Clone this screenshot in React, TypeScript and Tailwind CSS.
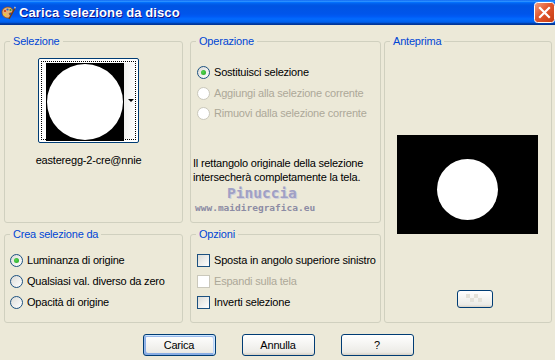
import React from "react";

const font = "font-['Liberation_Sans',Arial,sans-serif]";

function Radio({ checked = false, disabled = false, label }: { checked?: boolean; disabled?: boolean; label: string }) {
  return (
    <div className="flex items-center h-full whitespace-nowrap">
      <span
        className={`w-[13px] h-[13px] rounded-full border flex items-center justify-center shrink-0 ${
          disabled
            ? "border-[#cac8bb] bg-white"
            : "border-[#1c5180] bg-[linear-gradient(135deg,#dcdcd7,#ffffff)]"
        }`}
      >
        {checked && <span className="w-[5px] h-[5px] rounded-full bg-[radial-gradient(circle_at_40%_40%,#55d651,#21a121)]" />}
      </span>
      <span className={`ml-[4px] ${disabled ? "text-[#aca899]" : "text-black"}`}>{label}</span>
    </div>
  );
}

function Check({ disabled = false, label }: { disabled?: boolean; label: string }) {
  return (
    <div className="flex items-center h-full whitespace-nowrap">
      <span
        className={`w-[13px] h-[13px] border shrink-0 ${
          disabled
            ? "border-[#cac8bb] bg-white"
            : "border-[#1c5180] bg-[linear-gradient(135deg,#dcdcd7,#ffffff)]"
        }`}
      />
      <span className={`ml-[4px] ${disabled ? "text-[#aca899]" : "text-black"}`}>{label}</span>
    </div>
  );
}

function Group({ title, className, children }: { title: string; className: string; children: React.ReactNode }) {
  return (
    <fieldset className={`border border-[#d0d0bf] rounded-[3px] ${className}`}>
      <legend className="ml-[5px] px-[3px] leading-[13px] text-[#0046d5]">{title}</legend>
      {children}
    </fieldset>
  );
}

function XpButton({ label, isDefault = false }: { label: string; isDefault?: boolean }) {
  return (
    <button
      className={`w-[73px] h-[22px] rounded-[3px] border border-[#003c74] bg-[linear-gradient(180deg,#ffffff,#ecebe6_86%,#d6d0c5)] text-black leading-none ${
        isDefault
          ? "shadow-[inset_-1px_1px_#cee7ff,inset_1px_2px_#98b8ea,inset_-2px_2px_#bcd4f6,inset_1px_-1px_#89ade4,inset_2px_-2px_#89ade4]"
          : ""
      }`}
    >
      {label}
    </button>
  );
}

function AppIcon() {
  return (
    <svg width="16" height="16" viewBox="0 0 16 16" className="shrink-0">
      <path d="M2 7c0-3 3-5 6-5 3 0 5 2 5 4 0 2-2 2-3 2s-1 1 0 2c1 1 0 3-2 3-3 0-6-2-6-6z" fill="#e8b070" stroke="#8a4b1c" strokeWidth="0.8" />
      <circle cx="5" cy="6" r="1.1" fill="#d03020" />
      <circle cx="7.5" cy="4.5" r="1.1" fill="#2060d0" />
      <circle cx="10.5" cy="5" r="1.1" fill="#30a030" />
      <circle cx="5" cy="9.5" r="1.1" fill="#f0d020" />
      <path d="M9 14 L15 3" stroke="#7a3a10" strokeWidth="1.4" />
      <path d="M14.3 2.2 L15.6 3" stroke="#c0c0c0" strokeWidth="1.6" />
    </svg>
  );
}

function CloseIcon() {
  return (
    <svg width="21" height="21" viewBox="0 0 21 21" className="shrink-0">
      <defs>
        <linearGradient id="cl" x1="0" y1="0" x2="1" y2="1">
          <stop offset="0" stopColor="#f3a183" />
          <stop offset="0.45" stopColor="#e2572e" />
          <stop offset="1" stopColor="#c53a10" />
        </linearGradient>
      </defs>
      <rect x="0.5" y="0.5" width="20" height="20" rx="3" fill="url(#cl)" stroke="#ffffff" />
      <path d="M6 6 L15 15 M15 6 L6 15" stroke="#ffffff" strokeWidth="2.2" strokeLinecap="square" />
    </svg>
  );
}

export default function App() {
  return (
    <div className={`w-[555px] h-[360px] bg-[#ece9d8] text-[11px] tracking-[-0.2px] overflow-hidden ${font}`}>
      {/* title bar */}
      <div className="h-[25px] flex items-center bg-[linear-gradient(to_bottom,#0058ee_0%,#3593ff_4%,#288eff_6%,#127dff_8%,#036ffc_10%,#0262ee_14%,#0057e5_20%,#0054e3_24%,#0055eb_56%,#005bf5_66%,#026afe_76%,#0062ef_86%,#0052d6_92%,#0040ab_94%,#003092_100%)]">
        <div className="mt-[1px]">
          <AppIcon />
        </div>
        <span className="ml-[3px] text-white font-bold text-[13px] [text-shadow:1px_1px_#0f1089] tracking-[0.1px]">
          Carica selezione da disco
        </span>
        <div className="ml-auto mr-[0px]">
          <CloseIcon />
        </div>
      </div>

      {/* body */}
      <div className="flex pt-[10px] pl-[4px]">
        {/* left column */}
        <div className="flex flex-col w-[179px]">
          <Group title="Selezione" className="h-[188px]">
            <div className="ml-[33px] mt-[10px] w-[101px] flex flex-col items-center">
              <div className="w-[101px] h-[85px] rounded-[2px] border border-[#003c74] bg-white p-[2px]">
                <div className="w-full h-full border border-dotted border-black flex pl-[4px] pt-[1px]">
                  <div className="w-[78px] h-[78px] bg-black flex items-center justify-center">
                    <div className="w-[76px] h-[76px] rounded-full bg-white blur-[0.6px]" />
                  </div>
                  <div className="flex-1 flex items-center justify-end pr-[1px] bg-[linear-gradient(90deg,#f0f0ee,#ffffff)]">
                    <span className="w-0 h-0 border-l-[3px] border-r-[3px] border-t-[3px] border-l-transparent border-r-transparent border-t-black mt-[-2px]" />
                  </div>
                </div>
              </div>
              <div className="mt-[11px] leading-[13px] text-black whitespace-nowrap">easteregg-2-cre@nnie</div>
            </div>
          </Group>
          <Group title="Crea selezione da" className="h-[95px] mt-[5px]">
            <div className="mt-[9px] pl-[5px]">
              <div className="h-[21px]"><Radio checked label="Luminanza di origine" /></div>
              <div className="h-[21px]"><Radio label="Qualsiasi val. diverso da zero" /></div>
              <div className="h-[20px]"><Radio label="Opacità di origine" /></div>
            </div>
          </Group>
        </div>

        {/* middle column */}
        <div className="flex flex-col w-[191px] ml-[7px]">
          <Group title="Operazione" className="h-[188px]">
            <div className="mt-[14px] pl-[6px]">
              <div className="h-[21px]"><Radio checked label="Sostituisci selezione" /></div>
              <div className="h-[20px]"><Radio disabled label="Aggiungi alla selezione corrente" /></div>
              <div className="h-[20px]"><Radio disabled label="Rimuovi dalla selezione corrente" /></div>
            </div>
            <div className="mt-[33px] pl-[2px] leading-[14px] text-black">
              Il rettangolo originale della selezione
              <br />
              intersecherà completamente la tela.
            </div>
            <div className="ml-[36px] mt-[1px] leading-[16px] font-['DejaVu_Sans_Mono',monospace] font-bold text-[14.5px] tracking-normal text-[#a0a0c4] [text-shadow:1px_1px_#cfcfdc]">
              Pinuccia
            </div>
            <div className="ml-[4px] leading-[14px] font-['DejaVu_Sans_Mono',monospace] font-bold text-[9.5px] tracking-normal text-[#8c8ca4]">
              www.maidiregrafica.eu
            </div>
          </Group>
          <Group title="Opzioni" className="h-[95px] mt-[5px]">
            <div className="mt-[9px] pl-[6px]">
              <div className="h-[21px]"><Check label="Sposta in angolo superiore sinistro" /></div>
              <div className="h-[21px]"><Check disabled label="Espandi sulla tela" /></div>
              <div className="h-[20px]"><Check label="Inverti selezione" /></div>
            </div>
          </Group>
        </div>

        {/* right column */}
        <Group title="Anteprima" className="w-[168px] h-[288px] ml-[3px]">
          <div className="mt-[87px] ml-[12px] w-[141px] h-[99px] bg-black flex justify-center">
            <div className="mt-[24px] w-[61px] h-[61px] rounded-full bg-white" />
          </div>
          <div className="mt-[56px] ml-[72px] w-[36px] h-[18px] rounded-[3px] border border-[#003c74] bg-[linear-gradient(180deg,#ffffff,#ecebe6_86%,#d6d0c5)] flex items-center justify-center">
            <svg width="22" height="10" viewBox="0 0 22 10">
              <g fill="#e4e2da">
                <rect x="2" y="0" width="4" height="4" />
                <rect x="10" y="0" width="4" height="4" />
                <rect x="6" y="4" width="4" height="4" />
                <rect x="14" y="4" width="4" height="4" />
              </g>
            </svg>
          </div>
        </Group>
      </div>

      {/* buttons */}
      <div className="flex justify-center gap-[26px] mt-[11px] pl-[1px]">
        <XpButton label="Carica" isDefault />
        <XpButton label="Annulla" />
        <XpButton label="?" />
      </div>
    </div>
  );
}
